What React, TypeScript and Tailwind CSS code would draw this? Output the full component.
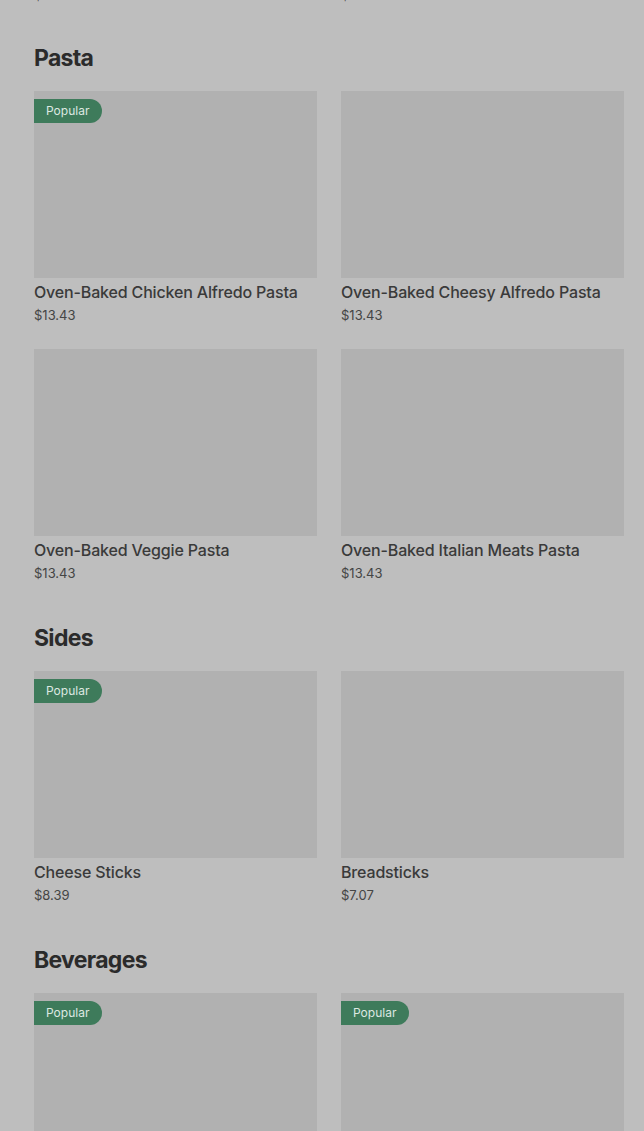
import React from "react";

type Item = { name: string; price: string; popular?: boolean };

const sections: { title: string; items: Item[] }[] = [
  {
    title: "Pasta",
    items: [
      { name: "Oven-Baked Chicken Alfredo Pasta", price: "$13.43", popular: true },
      { name: "Oven-Baked Cheesy Alfredo Pasta", price: "$13.43" },
      { name: "Oven-Baked Veggie Pasta", price: "$13.43" },
      { name: "Oven-Baked Italian Meats Pasta", price: "$13.43" },
    ],
  },
  {
    title: "Sides",
    items: [
      { name: "Cheese Sticks", price: "$8.39", popular: true },
      { name: "Breadsticks", price: "$7.07" },
    ],
  },
  {
    title: "Beverages",
    items: [
      { name: "Coke", price: "$3.49", popular: true },
      { name: "Diet Coke", price: "$3.49", popular: true },
    ],
  },
];

function Card({ item }: { item: Item }) {
  return (
    <div className="flex flex-col">
      <div className="relative h-[187px] bg-[#b1b1b1]">
        {item.popular && (
          <span className="absolute left-0 top-[8px] flex h-[24px] items-center rounded-r-full bg-[#3e7b5b] pl-[12px] pr-[13px] text-[12px] text-[#dde8e1]">
            Popular
          </span>
        )}
      </div>
      <div className="mt-[4px] text-[16px] leading-[20px] font-medium tracking-[-0.01em] text-[#3a3a3a]">{item.name}</div>
      <div className="mt-[4px] text-[13px] leading-[18px] text-[#454545]">{item.price}</div>
    </div>
  );
}

export default function App() {
  return (
    <div
      className="h-screen overflow-hidden bg-[#bebebe]"
      style={{ fontFamily: "Inter, 'Noto Sans', sans-serif" }}
    >
      <div className="-mt-[14px] pl-[34px] pr-[20px]">
        <div className="grid grid-cols-2 gap-x-[24px]">
          <div className="text-[13px] leading-[18px] text-[#454545]">$13.43</div>
          <div className="text-[13px] leading-[18px] text-[#454545]">$13.43</div>
        </div>
        {sections.map((s, i) => (
          <section key={s.title} className={i === 0 ? "mt-[40px]" : "mt-[42px]"}>
            <h2 className="text-[23px] leading-[28px] font-bold tracking-[-0.03em] text-[#2b2b2b]">{s.title}</h2>
            <div className="mt-[19px] grid grid-cols-2 gap-x-[24px] gap-y-[25px]">
              {s.items.map((it) => (
                <Card key={it.name} item={it} />
              ))}
            </div>
          </section>
        ))}
      </div>
    </div>
  );
}
